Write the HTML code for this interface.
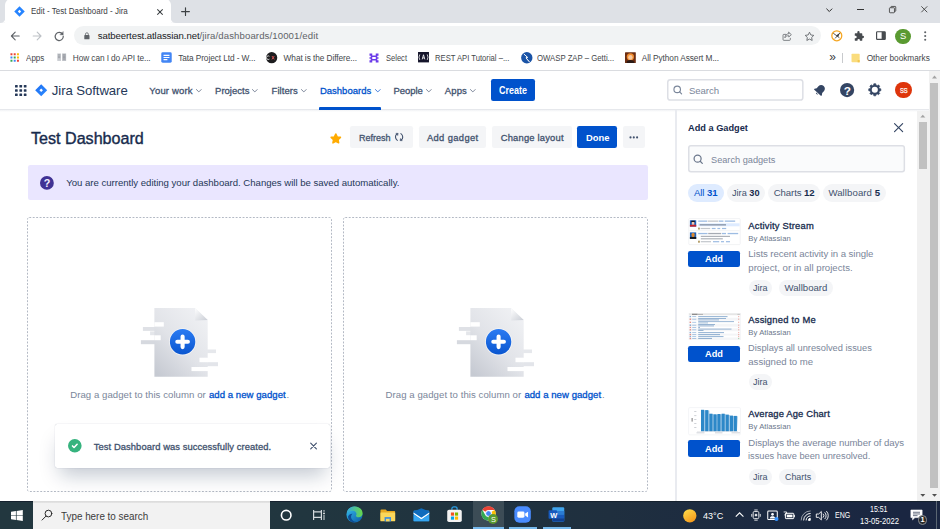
<!DOCTYPE html>
<html lang="en"><head><meta charset="utf-8"><title>Edit - Test Dashboard - Jira</title>
<style>
html,body{margin:0;padding:0;}
body{width:940px;height:529px;overflow:hidden;position:relative;background:#fff;font-family:"Liberation Sans",sans-serif;}
.a{position:absolute;}
.t{position:absolute;white-space:nowrap;font-family:"Liberation Sans",sans-serif;}
.t b{font-weight:700;}
svg{position:absolute;overflow:visible;}
#tabbar{left:0;top:0;width:940px;height:22.800px;background:#dee1e6;}
#tab{left:5.300px;top:-1px;width:165.500px;height:24px;background:#fff;border-radius:6px 6px 0 0;}
#toolbar{left:0;top:22.800px;width:940px;height:25.200px;background:#fff;}
#omni{left:74.400px;top:26.100px;width:747px;height:19.400px;border-radius:10px;background:#f1f3f4;}
#bmbar{left:0;top:48px;width:940px;height:22px;background:#fff;border-bottom:1px solid #dadce0;}
#nav{left:0;top:71px;width:929px;height:38.100px;background:#fff;border-bottom:1.200px solid #e6e8ec;}
#navshadow{left:0;top:110.300px;width:929px;height:1.500px;background:linear-gradient(#f1f2f5,rgba(241,242,245,0));}
.btn{position:absolute;background:#f4f5f7;border-radius:2.2px;}
.pbtn{position:absolute;background:#0052cc;border-radius:2.2px;}
.col{position:absolute;border:1px dashed #c1c7d0;border-radius:3px;box-sizing:border-box;}
.pill{position:absolute;background:#f4f5f7;border-radius:9px;}
#taskbar{left:0;top:501.200px;width:940px;height:27.800px;background:linear-gradient(90deg,#22373f 0%,#21363f 32%,#20333f 50%,#1f2f3f 65%,#1c2a41 80%,#1a2641 96%,#1a2641 100%);border-top:0.800px solid #15212e;box-sizing:border-box;}

</style></head>
<body>
<!-- Chrome tab strip -->
<div class="a" id="tabbar"></div>
<div class="a" id="tab"></div>
<svg style="left:0;top:17px" width="180" height="6" viewBox="0 17 180 6"><path d="M170.800 22.800V17.500Q170.800 22.800 176 22.800zM5.300 22.800V17.500Q5.300 22.800 0.100 22.800z" fill="#fff"/></svg>
<span class="t" style="left:30.9px;top:7.00px;font-size:8.3px;line-height:8.3px;font-weight:400;color:#3c4043;transform-origin:0 50%;transform:scaleX(0.9644);">Edit - Test Dashboard - Jira</span>
<div class="a" id="toolbar"></div>
<div class="a" id="omni"></div>
<span class="t" style="left:97.7px;top:31.00px;font-size:9.6px;line-height:9.6px;font-weight:400;color:#202124;letter-spacing:-0.088px;">satbeertest.atlassian.net</span>
<span class="t" style="left:199.5px;top:31.00px;font-size:9.6px;line-height:9.6px;font-weight:400;color:#5f6368;letter-spacing:0.109px;">/jira/dashboards/10001/edit</span>
<div class="a" id="bmbar"></div>

<!-- tab: favicon, close, new tab -->
<svg style="left:13.700px;top:6.200px" width="11" height="11" viewBox="0 0 24 24"><path d="M12 0.600L23.400 12 12 23.400 0.600 12z" fill="#2684ff"/><path d="M12 8.400L15.600 12 12 15.600 8.400 12z" fill="#fff"/></svg>
<svg style="left:156.6px;top:8.6px" width="6" height="6" viewBox="0 0 10 10"><path d="M1 1l8 8M9 1l-8 8" stroke="#3c4043" stroke-width="1.7" stroke-linecap="round"/></svg>
<svg style="left:181px;top:7px" width="9" height="9" viewBox="181 7 9 9"><path d="M185.500 7.700v7.800M181.600 11.600h7.800" stroke="#3c4043" stroke-width="1.150" stroke-linecap="round"/></svg>
<!-- window controls -->
<svg style="left:826.4px;top:7.6px" width="6.6" height="4.2" viewBox="0 0 10 6"><path d="M0.600 0.800L5 5.200 9.400 0.800" fill="none" stroke="#2a2a2a" stroke-width="1.500"/></svg>
<div class="a" style="left:857.2px;top:9.3px;width:7.2px;height:0.9px;background:#333"></div>
<svg style="left:889.2px;top:6.2px" width="7.2" height="7.2" viewBox="0 0 10 10" fill="none" stroke="#333" stroke-width="1.1"><rect x="0.6" y="2.4" width="7" height="7" rx="1"/><path d="M2.6 2.2V1.4a0.8 0.8 0 0 1 .8-.8h5.200a0.800 0.800 0 0 1 .8.800v5.200a0.800 0.800 0 0 1-.8.800H7.800"/></svg>
<svg style="left:920.6px;top:6.4px" width="6.6" height="6.6" viewBox="0 0 10 10"><path d="M0.500 0.500l9 9M9.500 0.500l-9 9" stroke="#333" stroke-width="1.25"/></svg>
<!-- toolbar: back, forward, reload -->
<svg style="left:10.200px;top:30.700px" width="10.400" height="10" viewBox="0 0 20 20" fill="none" stroke="#5f6368" stroke-width="2.200" stroke-linecap="round" stroke-linejoin="round"><path d="M18 10H2.600M10 2.400L2.400 10l7.600 7.600"/></svg>
<svg style="left:32.200px;top:30.700px" width="10.400" height="10" viewBox="0 0 20 20" fill="none" stroke="#bdc1c6" stroke-width="2.200" stroke-linecap="round" stroke-linejoin="round"><path d="M2 10h15.400M10 2.400l7.600 7.600-7.600 7.600"/></svg>
<svg style="left:54px;top:30.600px" width="10.400" height="10.400" viewBox="0 0 20 20" fill="none" stroke="#5f6368" stroke-width="2.300" stroke-linecap="round"><path d="M16.600 6.400A7.800 7.800 0 1 0 17.800 10"/><path d="M17.600 1.800v5.400h-5.400z" fill="#5f6368" stroke-width="1" stroke-linejoin="round"/></svg>
<!-- lock -->
<svg style="left:84px;top:31.600px" width="5.800" height="7.600" viewBox="0 0 12 16"><rect x="0.500" y="6.500" width="11" height="9" rx="1.400" fill="#5f6368"/><path d="M3 7V4.600a3 3 0 0 1 6 0V7" fill="none" stroke="#5f6368" stroke-width="1.700"/></svg>
<!-- share, star -->
<svg style="left:782.200px;top:31px" width="10.400" height="10.400" viewBox="0 0 20 20" fill="none" stroke="#5f6368" stroke-width="1.500" stroke-linejoin="round" stroke-linecap="round"><path d="M7 6.500H3.500a1.500 1.500 0 0 0-1.500 1.500v8.500a1.500 1.500 0 0 0 1.500 1.500h11a1.500 1.500 0 0 0 1.500-1.500V14"/><path d="M13 2.500l5 4.500-5 4.500V9c-4 0-6 1.500-7.500 4 .5-4.500 3-7.500 7.500-8z"/></svg>
<svg style="left:803.800px;top:30.800px" width="11" height="10.600" viewBox="0 0 24 23"><path d="M12 2.600l2.900 6 6.500.9-4.700 4.600 1.100 6.500L12 17.500l-5.800 3.100 1.100-6.500L2.600 9.500l6.500-.9z" fill="none" stroke="#5f6368" stroke-width="1.900" stroke-linejoin="round"/></svg>
<!-- extension orange -->
<svg style="left:830.800px;top:30.400px" width="11.600" height="11.600" viewBox="0 0 20 20"><circle cx="10" cy="10" r="8.600" fill="#fff" stroke="#f5a623" stroke-width="2.200"/><path d="M4.500 6l9.500 7M15 5.500L7.500 14" stroke="#3a3a3a" stroke-width="1.500" stroke-linecap="round"/><path d="M15 5.500L9 9l3.500 2.500z" fill="#3a3a3a"/></svg>
<!-- puzzle -->
<svg style="left:853.400px;top:30.800px" width="10.800" height="10.800" viewBox="0 0 20 20"><path d="M8 2.200a2.100 2.100 0 0 1 4.200 0V4H16a1.200 1.200 0 0 1 1.200 1.200V9h1.100a2.100 2.100 0 0 1 0 4.200H17.200V17A1.200 1.200 0 0 1 16 18.200h-3.300v-1.400a2.200 2.200 0 0 0-4.400 0v1.400H4.500A1.200 1.200 0 0 1 3.300 17v-3.600h1.200a2.300 2.300 0 0 0 0-4.600H3.300V5.200A1.200 1.200 0 0 1 4.500 4H8z" fill="#474b4f"/></svg>
<!-- side panel -->
<svg style="left:876.200px;top:31.400px" width="9.800" height="9.200" viewBox="0 0 20 18"><rect x="1.200" y="1.200" width="17.600" height="15.600" rx="1.500" fill="#fff" stroke="#474b4f" stroke-width="2.400"/><rect x="11.500" y="1.200" width="7.300" height="15.600" fill="#474b4f"/></svg>
<!-- avatar -->
<div class="a" style="left:895.300px;top:28.500px;width:15.400px;height:15.400px;border-radius:50%;background:#5a9a31"></div>
<span class="t" style="left:899.9px;top:31.00px;font-size:9.4px;line-height:9.4px;font-weight:400;color:#fff;letter-spacing:0.000px;">S</span>
<svg style="left:923.600px;top:31.200px" width="2.400" height="10" viewBox="0 0 2.400 10" fill="#5f6368"><circle cx="1.200" cy="1.300" r="1.050"/><circle cx="1.200" cy="5" r="1.050"/><circle cx="1.200" cy="8.700" r="1.050"/></svg>

<!-- bookmarks -->
<svg style="left:9.700px;top:53px" width="9.400" height="9" viewBox="0 0 10 10"><g><rect x="0.300" y="0.300" width="2.200" height="2.200" fill="#ea4335"/><rect x="3.900" y="0.300" width="2.200" height="2.200" fill="#ea4335"/><rect x="7.500" y="0.300" width="2.200" height="2.200" fill="#fbbc04"/><rect x="0.300" y="3.900" width="2.200" height="2.200" fill="#4285f4"/><rect x="3.900" y="3.900" width="2.200" height="2.200" fill="#34a853"/><rect x="7.500" y="3.900" width="2.200" height="2.200" fill="#fbbc04"/><rect x="0.300" y="7.500" width="2.200" height="2.200" fill="#34a853"/><rect x="3.900" y="7.500" width="2.200" height="2.200" fill="#4285f4"/><rect x="7.500" y="7.500" width="2.200" height="2.200" fill="#ea4335"/></g></svg>
<span class="t" style="left:26.3px;top:54.00px;font-size:8.3px;line-height:8.3px;font-weight:400;color:#44474b;transform-origin:0 50%;transform:scaleX(0.9724);">Apps</span>
<svg style="left:56.700px;top:53.400px" width="9.400" height="8.400" viewBox="0 0 20 18"><rect x="0.500" y="1" width="8" height="16" fill="#c9ccd1"/><rect x="11" y="1" width="8.500" height="16" fill="#b9bcc2"/><path d="M2 4h5M2 7h5M2 10h5M12.500 4h5.500M12.500 7h5.500M12.500 10h5.500M12.500 13h5.500" stroke="#7d8188" stroke-width="1.200"/></svg>
<span class="t" style="left:72.8px;top:54.00px;font-size:8.3px;line-height:8.3px;font-weight:400;color:#44474b;letter-spacing:-0.091px;">How can I do API te...</span>
<svg style="left:161.300px;top:52.400px" width="11" height="11" viewBox="0 0 20 20"><rect x="0.500" y="0.500" width="19" height="19" rx="2.600" fill="#4285f4"/><path d="M4.600 6.200h10.800M4.600 10h10.800M4.600 13.800h7" stroke="#fff" stroke-width="2"/></svg>
<span class="t" style="left:178.2px;top:54.00px;font-size:8.3px;line-height:8.3px;font-weight:400;color:#44474b;letter-spacing:-0.087px;">Tata Project Ltd - W...</span>
<svg style="left:266.400px;top:51.800px" width="11.400" height="11.400" viewBox="0 0 20 20"><circle cx="10" cy="10" r="9.800" fill="#1d1d1f"/><path d="M6 12.500a3.200 3.200 0 1 1 0-5" fill="none" stroke="#e8e8e8" stroke-width="1.500"/><path d="M10.500 7l4 6M14.500 7l-4 6" stroke="#e85a5a" stroke-width="1.500"/></svg>
<span class="t" style="left:283.6px;top:54.00px;font-size:8.3px;line-height:8.3px;font-weight:400;color:#44474b;letter-spacing:-0.078px;">What is the Differe...</span>
<svg style="left:369px;top:52.600px" width="10" height="10" viewBox="0 0 20 20" fill="#6c3ce9"><path d="M1 1h5.500v4h7V1H19v4.500h-2.500v3H19v3h-2.500v3H19V19h-5.500v-4h-7v4H1v-4.500h2.500v-3H1v-3h2.500v-3H1z"/><rect x="6.500" y="8" width="7" height="4" fill="#fff"/></svg>
<span class="t" style="left:385.7px;top:54.00px;font-size:8.3px;line-height:8.3px;font-weight:400;color:#44474b;transform-origin:0 50%;transform:scaleX(0.9106);">Select</span>
<svg style="left:418.200px;top:52.400px" width="11" height="10.400" viewBox="0 0 20 19"><rect width="20" height="19" fill="#15152b"/><path d="M3.200 4.500L1.800 9.500 3.200 14.500M16.800 4.500l1.400 5-1.400 5" stroke="#fff" stroke-width="1.400" fill="none"/><path d="M7.600 13.500L10 5l2.400 8.500M8.400 10.800h3.200" stroke="#fff" stroke-width="1.500" fill="none"/></svg>
<span class="t" style="left:435px;top:54.00px;font-size:8.3px;line-height:8.3px;font-weight:400;color:#44474b;transform-origin:0 50%;transform:scaleX(0.9224);">REST API Tutorial –...</span>
<svg style="left:520.600px;top:51.800px" width="11.600" height="11.600" viewBox="0 0 20 20"><circle cx="10" cy="10" r="9.800" fill="#1a53a6"/><path d="M5 3.500l6 5.500-2.500 1L14.500 17 9 10.500l2.500-1z" fill="#fff" stroke="#fff" stroke-width="1.300" stroke-linejoin="round"/></svg>
<span class="t" style="left:537.4px;top:54.00px;font-size:8.3px;line-height:8.3px;font-weight:400;color:#44474b;transform-origin:0 50%;transform:scaleX(0.9358);">OWASP ZAP – Getti...</span>
<svg style="left:625.400px;top:52px" width="10.800" height="11.200" viewBox="0 0 20 20"><rect width="20" height="20" rx="1" fill="#6b2d12"/><circle cx="10" cy="8.600" r="6.800" fill="#f08a2c"/><circle cx="10" cy="9.600" r="4.200" fill="#f6c9a0"/><path d="M3 20c0-4 3-5.500 7-5.500s7 1.500 7 5.500z" fill="#2a1a16"/></svg>
<span class="t" style="left:641.8px;top:54.00px;font-size:8.3px;line-height:8.3px;font-weight:400;color:#44474b;letter-spacing:-0.071px;">All Python Assert M...</span>
<span class="t" style="left:829.3px;top:51.00px;font-size:12px;line-height:12px;font-weight:400;color:#3c4043;letter-spacing:0.000px;">»</span>
<div class="a" style="left:842.200px;top:52.800px;width:0.800px;height:9.800px;background:#c8cacd"></div>
<svg style="left:850.800px;top:53px" width="9.200" height="10" viewBox="0 0 18 19"><path d="M1 2.400A1.400 1.400 0 0 1 2.400 1h13.200A1.400 1.400 0 0 1 17 2.400V18H2.400A1.400 1.400 0 0 1 1 16.600z" fill="#fadc7d"/><path d="M13 13.500h4V18h-4z" fill="#f3c64b"/></svg>
<span class="t" style="left:866.7px;top:54.00px;font-size:8.3px;line-height:8.3px;font-weight:400;color:#44474b;letter-spacing:-0.036px;">Other bookmarks</span>

<!-- Jira nav -->
<div class="a" id="nav"></div>
<div class="a" id="navshadow"></div>
<span class="t" style="left:51.8px;top:84.00px;font-size:13.2px;line-height:13.2px;font-weight:400;color:#253858;letter-spacing:-0.082px;">Jira Software</span>
<span class="t" style="left:149.3px;top:86.00px;font-size:9.5px;line-height:9.5px;font-weight:400;color:#42526e;letter-spacing:0.166px;-webkit-text-stroke:0.3px #42526e;">Your work</span>
<span class="t" style="left:215.1px;top:86.00px;font-size:9.5px;line-height:9.5px;font-weight:400;color:#42526e;letter-spacing:-0.004px;-webkit-text-stroke:0.3px #42526e;">Projects</span>
<span class="t" style="left:271.6px;top:86.00px;font-size:9.5px;line-height:9.5px;font-weight:400;color:#42526e;letter-spacing:0.032px;-webkit-text-stroke:0.3px #42526e;">Filters</span>
<span class="t" style="left:319.9px;top:86.00px;font-size:9.5px;line-height:9.5px;font-weight:400;color:#0052cc;letter-spacing:0.007px;-webkit-text-stroke:0.3px #0052cc;">Dashboards</span>
<span class="t" style="left:393.4px;top:86.00px;font-size:9.5px;line-height:9.5px;font-weight:400;color:#42526e;letter-spacing:-0.049px;-webkit-text-stroke:0.3px #42526e;">People</span>
<span class="t" style="left:444.8px;top:86.00px;font-size:9.5px;line-height:9.5px;font-weight:400;color:#42526e;letter-spacing:0.136px;-webkit-text-stroke:0.3px #42526e;">Apps</span>
<div class="a" style="left:318.6px;top:107px;width:62.5px;height:2.6px;background:#0052cc;border-radius:1px 1px 0 0"></div>
<div class="pbtn" style="left:490.800px;top:79.100px;width:44.400px;height:21.900px"></div>
<span class="t" style="left:499.3px;top:86.00px;font-size:10.3px;line-height:10.3px;font-weight:700;color:#fff;transform-origin:0 50%;transform:scaleX(0.8702);">Create</span>
<svg style="left:666px;top:78.1px" width="138.6" height="23.8" viewBox="666 78.1 138.6 23.8"><rect x="667.75" y="79.85" width="135.10" height="20.30" rx="2.6" fill="#fff" stroke="#dddfe5" stroke-width="1.5"/></svg>
<span class="t" style="left:689px;top:86.00px;font-size:9.6px;line-height:9.6px;font-weight:400;color:#7a869a;letter-spacing:-0.084px;">Search</span>

<!-- nav icons -->
<svg style="left:14.800px;top:84.500px" width="11.500" height="11" viewBox="0 0 11.500 11" fill="#253858"><rect x="0" y="0" width="2.700" height="2.600" rx="0.500"/><rect x="4.400" y="0" width="2.700" height="2.600" rx="0.500"/><rect x="8.800" y="0" width="2.700" height="2.600" rx="0.500"/><rect x="0" y="4.200" width="2.700" height="2.600" rx="0.500"/><rect x="4.400" y="4.200" width="2.700" height="2.600" rx="0.500"/><rect x="8.800" y="4.200" width="2.700" height="2.600" rx="0.500"/><rect x="0" y="8.400" width="2.700" height="2.600" rx="0.500"/><rect x="4.400" y="8.400" width="2.700" height="2.600" rx="0.500"/><rect x="8.800" y="8.400" width="2.700" height="2.600" rx="0.500"/></svg>
<svg style="left:35.400px;top:83.900px" width="12.400" height="12.400" viewBox="0 0 24 24"><defs><linearGradient id="jl" x1="0" y1="0" x2="1" y2="1"><stop offset="0" stop-color="#1c6ef2"/><stop offset="1" stop-color="#2e8bff"/></linearGradient></defs><path d="M12 0.400L23.600 12 12 23.600 0.400 12z" fill="url(#jl)"/><path d="M12 8.600L15.400 12 12 15.400 8.600 12z" fill="#fff"/></svg>
<svg style="left:195.600px;top:88.700px" width="5.600" height="3.600" viewBox="0 0 10 6"><path d="M0.800 0.800L5 5 9.200 0.800" fill="none" stroke="#6b778c" stroke-width="1.600" stroke-linecap="round" stroke-linejoin="round"/></svg>
<svg style="left:252px;top:88.700px" width="5.600" height="3.600" viewBox="0 0 10 6"><path d="M0.800 0.800L5 5 9.200 0.800" fill="none" stroke="#6b778c" stroke-width="1.600" stroke-linecap="round" stroke-linejoin="round"/></svg>
<svg style="left:300.600px;top:88.700px" width="5.600" height="3.600" viewBox="0 0 10 6"><path d="M0.800 0.800L5 5 9.200 0.800" fill="none" stroke="#6b778c" stroke-width="1.600" stroke-linecap="round" stroke-linejoin="round"/></svg>
<svg style="left:374.500px;top:88.700px" width="5.600" height="3.600" viewBox="0 0 10 6"><path d="M0.800 0.800L5 5 9.200 0.800" fill="none" stroke="#2a6cd6" stroke-width="1.600" stroke-linecap="round" stroke-linejoin="round"/></svg>
<svg style="left:425.600px;top:88.700px" width="5.600" height="3.600" viewBox="0 0 10 6"><path d="M0.800 0.800L5 5 9.200 0.800" fill="none" stroke="#6b778c" stroke-width="1.600" stroke-linecap="round" stroke-linejoin="round"/></svg>
<svg style="left:470.200px;top:88.700px" width="5.600" height="3.600" viewBox="0 0 10 6"><path d="M0.800 0.800L5 5 9.200 0.800" fill="none" stroke="#6b778c" stroke-width="1.600" stroke-linecap="round" stroke-linejoin="round"/></svg>

<svg style="left:672px;top:84px" width="12" height="12" viewBox="672 84 12 12" fill="none" stroke="#7a869a" stroke-width="1.150" stroke-linecap="round"><circle cx="677.200" cy="89.400" r="3.250"/><path d="M679.600 91.800l2 2"/></svg>
<svg style="left:812.500px;top:83.200px" width="14" height="14" viewBox="0 0 24 24"><g transform="rotate(42 12 12)" fill="#344563"><path d="M12 2.600c-3.700 0-6.300 2.900-6.300 6.500v4.300L3.600 16.600c-.5.800 0 1.700.9 1.700h15c.9 0 1.400-.9.900-1.700l-2.100-3.200V9.100c0-3.600-2.600-6.500-6.300-6.500z"/><path d="M9.800 19.600a2.300 2.300 0 0 0 4.400 0z"/></g></svg>
<svg style="left:840px;top:83px" width="14.200" height="14.200" viewBox="0 0 20 20"><circle cx="10" cy="10" r="10" fill="#344563"/></svg>
<span class="t" style="left:843.8px;top:86.00px;font-size:11.8px;line-height:11.8px;font-weight:700;color:#fff;letter-spacing:0.000px;">?</span>
<svg style="left:867.500px;top:83.200px" width="13.600" height="13.600" viewBox="0 0 20 20"><path d="M18.89 8.59 L18.89 11.41 L16.90 11.66 L16.05 13.71 L17.28 15.29 L15.29 17.28 L13.71 16.05 L11.66 16.90 L11.41 18.89 L8.59 18.89 L8.34 16.90 L6.29 16.05 L4.71 17.28 L2.72 15.29 L3.95 13.71 L3.10 11.66 L1.11 11.41 L1.11 8.59 L3.10 8.34 L3.95 6.29 L2.72 4.71 L4.71 2.72 L6.29 3.95 L8.34 3.10 L8.59 1.11 L11.41 1.11 L11.66 3.10 L13.71 3.95 L15.29 2.72 L17.28 4.71 L16.05 6.29 L16.90 8.34z" fill="#344563" stroke="#344563" stroke-width="1" stroke-linejoin="round"/><circle cx="10" cy="10" r="4.500" fill="#fff"/></svg>
<div class="a" style="left:895.300px;top:81.700px;width:16.600px;height:16.600px;border-radius:50%;background:#de350b"></div>
<span class="t" style="left:899.8px;top:88.00px;font-size:6.8px;line-height:6.8px;font-weight:400;color:#fff;transform-origin:0 50%;transform:scaleX(0.8482);-webkit-text-stroke:0.25px #fff;">SS</span>

<!-- Taskbar -->
<div class="a" id="taskbar"></div>

<svg style="left:10.700px;top:509.600px" width="11.800" height="11" viewBox="0 0 24 22" fill="#fff"><path d="M0 3.200L10 1.800V10.400H0zM11.400 1.600L24 0V10.400H11.400zM0 11.600H10V20.200L0 18.800zM11.400 11.600H24V22L11.400 20.400z"/></svg>
<div class="a" style="left:33.200px;top:501.200px;width:236.400px;height:27.800px;background:linear-gradient(#dcdcdc 0,#dedede 1.300px,#f2f2f2 2.200px)"></div>
<svg style="left:41.300px;top:509px" width="12" height="12" viewBox="0 0 20 20" fill="none" stroke="#222" stroke-width="1.600" stroke-linecap="round"><circle cx="12.400" cy="7.600" r="5.600"/><path d="M8.400 11.800L1.800 18.400"/></svg>
<span class="t" style="left:60.8px;top:512.00px;font-size:10.3px;line-height:10.3px;font-weight:400;color:#3b3b3b;transform-origin:0 50%;transform:scaleX(0.9581);">Type here to search</span>
<!-- cortana, task view -->
<svg style="left:280px;top:508.700px" width="12.400" height="12.400" viewBox="0 0 20 20"><circle cx="10" cy="10" r="7.700" fill="none" stroke="#fff" stroke-width="2.600"/></svg>
<svg style="left:311px;top:508px" width="16" height="14" viewBox="311 508 16 14" fill="none" stroke="#d3d9dc" stroke-width="1.200"><path d="M313.600 509.900v10.200M321.400 509.900v10.200M313.600 511.900h7.800M313.600 517.400h7.800"/><path d="M324 510v1.800M324 515v5.100" stroke-width="1.100" stroke="#c3cacd"/><circle cx="324" cy="513.400" r="0.850" fill="#fff" stroke="none"/></svg>
<!-- edge -->
<svg style="left:345.800px;top:506.200px" width="17" height="17" viewBox="0 0 24 24"><defs><linearGradient id="eg1" x1="0" y1="0" x2="1" y2="1"><stop offset="0" stop-color="#35c1f1"/><stop offset="1" stop-color="#0c59a4"/></linearGradient><linearGradient id="eg2" x1="0" y1="0" x2="1" y2="0"><stop offset="0" stop-color="#34a8e0"/><stop offset="1" stop-color="#68d849"/></linearGradient></defs><circle cx="12" cy="12" r="11.400" fill="url(#eg1)"/><path d="M1 10.500C2 4.500 6.500 0.600 12 0.600c6.500 0 11.400 4.400 11.400 9.900 0 3.400-2.600 5.500-5.600 5.500-2.400 0-3.800-1-3.800-2.200 0-.8.800-1.200.8-2.600 0-2.300-2.200-4.400-5.200-4.400-4 0-7 2.400-8.600 3.700z" fill="url(#eg2)"/><path d="M9.200 10.800c-1.800 1.500-2.600 4-1.600 6.800 1 2.700 3.600 4.600 6.600 4.800-5 1.600-10.600-1.400-11.400-7.400 1-2.800 3.600-4.400 6.400-4.200z" fill="#0d4e96"/></svg>
<!-- explorer -->
<svg style="left:380px;top:507.600px" width="15.600" height="14" viewBox="0 0 22 20"><path d="M0.500 3.500A1.500 1.500 0 0 1 2 2h6l2 2.400h10.500a1 1 0 0 1 1 1V18H0.500z" fill="#e8a820"/><rect x="0.500" y="6.400" width="21" height="12.600" rx="0.800" fill="#fbd75b"/><rect x="6.400" y="13" width="9.200" height="6" fill="#3e8ede"/><rect x="8.400" y="15.400" width="5.200" height="3.600" fill="#fbd75b"/></svg>
<!-- mail -->
<svg style="left:413.400px;top:508.200px" width="16.800" height="13.600" viewBox="0 0 24 20"><rect x="0.500" y="3.500" width="23" height="16" rx="1" fill="#1a8ee6"/><path d="M0.500 5L12 0.500 23.500 5v3L12 14 0.500 8z" fill="#0f6cbd"/><path d="M0.500 6.500L12 14.500 23.500 6.500V9L12 17 0.500 9z" fill="#fff"/><path d="M0.500 9.500L12 17l11.500-7.500V19.500H0.500z" fill="#35a6f2"/></svg>
<!-- store -->
<svg style="left:447.200px;top:506.400px" width="15" height="16.600" viewBox="0 0 20 22"><path d="M6.500 5V3.600A2.600 2.600 0 0 1 9.100 1h1.800a2.600 2.600 0 0 1 2.600 2.600V5" fill="none" stroke="#2aa0e8" stroke-width="1.700"/><rect x="0.300" y="4.800" width="19.400" height="16.400" rx="2.400" fill="#f3f3f3"/><rect x="5.200" y="8.600" width="4.200" height="4.200" fill="#f25022"/><rect x="10.600" y="8.600" width="4.200" height="4.200" fill="#7fba00"/><rect x="5.200" y="14" width="4.200" height="4.200" fill="#00a4ef"/><rect x="10.600" y="14" width="4.200" height="4.200" fill="#ffb900"/></svg>
<!-- chrome (active) -->
<div class="a" style="left:472.800px;top:501.200px;width:31.600px;height:27.800px;background:#3c4c56"></div>
<div class="a" style="left:472.600px;top:527.200px;width:31px;height:1.800px;background:#76b9ed"></div>
<svg style="left:481.200px;top:506.300px" width="15" height="15" viewBox="0 0 24 24"><circle cx="12" cy="12" r="11.400" fill="#fff"/><path d="M12 0.600A11.400 11.400 0 0 1 21.900 6.300H12a5.700 5.700 0 0 0-5 2.900L2.200 6.100A11.400 11.400 0 0 1 12 .6z" fill="#ea4335"/><path d="M21.900 6.300A11.400 11.400 0 0 1 11.400 23.400l5.500-8.500a5.700 5.700 0 0 0 0-5.800z" fill="#fbbc04" transform="rotate(0)"/><path d="M2.200 6.100L7 14.900a5.700 5.700 0 0 0 5 2.800l-1 5.700A11.400 11.400 0 0 1 2.200 6.100z" fill="#34a853"/><circle cx="12" cy="12" r="4.500" fill="#4285f4" stroke="#fff" stroke-width="1.200"/></svg>
<div class="a" style="left:488.300px;top:513.900px;width:10.200px;height:10.200px;border-radius:50%;background:#5a9a31"></div>
<span class="t" style="left:491px;top:516.00px;font-size:7.4px;line-height:7.4px;font-weight:400;color:#fff;letter-spacing:0.000px;">S</span>
<!-- zoom -->
<div class="a" style="left:509.100px;top:527.200px;width:27.800px;height:1.800px;background:#76b9ed"></div>
<svg style="left:514.200px;top:506.200px" width="17.200" height="17.200" viewBox="0 0 24 24"><rect x="0.500" y="0.500" width="23" height="23" rx="7" fill="#4a8cff"/><rect x="4.600" y="7.600" width="10" height="8.800" rx="2" fill="#fff"/><path d="M15.600 10.600L19.600 8v8l-4-2.600z" fill="#fff"/></svg>
<!-- word -->
<div class="a" style="left:543.200px;top:527.200px;width:27.700px;height:1.800px;background:#76b9ed"></div>
<svg style="left:548px;top:507.200px" width="16.800" height="15" viewBox="0 0 24 22"><rect x="6" y="0.500" width="17.500" height="21" rx="1.600" fill="#41a5ee"/><rect x="6" y="5.800" width="17.500" height="5.400" fill="#2b7cd3"/><rect x="6" y="11.200" width="17.500" height="5.200" fill="#185abd"/><rect x="6" y="16.400" width="17.500" height="5.100" fill="#103f91"/><rect x="0.500" y="4.600" width="12.400" height="12.800" rx="1.200" fill="#185abd"/></svg>
<span class="t" style="left:550.2px;top:512.00px;font-size:7.4px;line-height:7.4px;font-weight:700;color:#fff;letter-spacing:0.000px;">W</span>
<div class="a" style="left:936.300px;top:501.200px;width:0.800px;height:27.800px;background:#5a6672"></div>
<!-- tray -->
<svg style="left:683px;top:508.800px" width="13.600" height="13.600" viewBox="0 0 20 20"><defs><linearGradient id="sg" x1="0" y1="0" x2="0.600" y2="1"><stop offset="0" stop-color="#ffe14d"/><stop offset="1" stop-color="#f59b1d"/></linearGradient></defs><circle cx="10" cy="10" r="9.800" fill="url(#sg)"/></svg>
<span class="t" style="left:703.2px;top:511.00px;font-size:9.8px;line-height:9.8px;font-weight:400;color:#fff;transform-origin:0 50%;transform:scaleX(0.9228);">43°C</span>
<svg style="left:734.600px;top:512.400px" width="9.200" height="5.400" viewBox="0 0 12 7"><path d="M1 6L6 1l5 5" fill="none" stroke="#fff" stroke-width="1.400"/></svg>
<svg style="left:751px;top:509.200px" width="10" height="12" viewBox="0 0 14 17" fill="none" stroke="#fff" stroke-width="1.200"><rect x="3" y="3.600" width="8" height="10" rx="1.600"/><path d="M4.600 1.400h4.800M4.600 15.800h4.800M1 7v4M13 7v4"/><circle cx="7" cy="8.600" r="1.300" fill="#fff"/></svg>
<svg style="left:766.600px;top:509.600px" width="12.400" height="11.600" viewBox="0 0 18 17"><rect x="1" y="1.600" width="14" height="12.400" rx="1.200" fill="none" stroke="#fff" stroke-width="1.500"/><circle cx="8" cy="6.400" r="2" fill="#fff"/><path d="M4 12.400c0-2.400 2-3.200 4-3.200s4 .8 4 3.200z" fill="#fff"/><circle cx="13.800" cy="13.200" r="3" fill="#3794ff"/></svg>
<svg style="left:783.200px;top:510.600px" width="12" height="9.400" viewBox="0 0 18 14"><rect x="3.600" y="3.400" width="12.600" height="8" rx="1" fill="none" stroke="#fff" stroke-width="1.500"/><rect x="5.600" y="5.400" width="8.600" height="4" fill="#fff"/><path d="M17 6v3" stroke="#fff" stroke-width="1.500"/><path d="M1 1.400h4.400v3H3.200V7" stroke="#fff" stroke-width="1.300" fill="none"/></svg>
<svg style="left:800.400px;top:509.800px" width="11.400" height="11" viewBox="0 0 16 16" fill="none" stroke="#fff" stroke-width="1.400" stroke-linecap="round"><path d="M1.400 14.600A13 13 0 0 1 14.600 1.400" opacity="0.550"/><path d="M5 14.600A9.600 9.600 0 0 1 14.600 5" /><path d="M8.600 14.600A6 6 0 0 1 14.600 8.600"/><path d="M12 14.600a2.600 2.600 0 0 1 2.600-2.600V14.600z" fill="#fff"/></svg>
<svg style="left:816.400px;top:509.600px" width="12.600" height="11.400" viewBox="0 0 18 16" fill="none" stroke="#fff" stroke-width="1.300" stroke-linecap="round"><path d="M1 5.600h2.800L7.600 2v12L3.800 10.400H1z" stroke-linejoin="round"/><path d="M10.400 5.600a3.400 3.400 0 0 1 0 4.800M12.800 3.600a6.200 6.200 0 0 1 0 8.800M15.200 1.800a8.800 8.800 0 0 1 0 12.400"/></svg>
<span class="t" style="left:835px;top:511.00px;font-size:8.5px;line-height:8.5px;font-weight:400;color:#fff;transform-origin:0 50%;transform:scaleX(0.8251);">ENG</span>
<span class="t" style="left:870.4px;top:505.00px;font-size:8.6px;line-height:8.6px;font-weight:400;color:#fff;transform-origin:0 50%;transform:scaleX(0.8134);">15:51</span>
<span class="t" style="left:859.9px;top:517.00px;font-size:8.6px;line-height:8.6px;font-weight:400;color:#fff;transform-origin:0 50%;transform:scaleX(0.8893);">13-05-2022</span>
<svg style="left:909.600px;top:508.600px" width="13" height="12" viewBox="0 0 20 18"><path d="M1.400 1.400h17.200v11.600H7.600L4 16.400v-3.400H1.400z" fill="#fff" stroke="#fff" stroke-width="1" stroke-linejoin="round"/><path d="M4.600 4.800h10.800M4.600 7.400h10.800M4.600 10h7" stroke="#1a2641" stroke-width="1"/></svg>
<div class="a" style="left:917.600px;top:515px;width:9.600px;height:9.600px;border-radius:50%;background:#2b2b2b;border:0.900px solid #8a8f96;box-sizing:border-box"></div>
<span class="t" style="left:920.4px;top:516.00px;font-size:7.4px;line-height:7.4px;font-weight:700;color:#fff;letter-spacing:0.000px;">1</span>

<!-- Page header -->
<span class="t" style="left:30.6px;top:131.00px;font-size:16.7px;line-height:16.7px;font-weight:400;color:#172b4d;transform-origin:0 50%;transform:scaleX(0.9650);-webkit-text-stroke:0.4px #172b4d;">Test Dashboard</span>
<svg style="left:329.500px;top:133.100px" width="11.600" height="11" viewBox="0 0 24 23"><path d="M12 2l2.900 6.200 6.800 0.900-5 4.700 1.250 6.800L12 17.400 6.050 20.600l1.250-6.800L2.300 9.100l6.800-0.900z" fill="#ffab00" stroke="#ffab00" stroke-width="3.200" stroke-linejoin="round"/></svg>
<div class="btn" style="left:350.3px;top:126.1px;width:62.8px;height:21.8px"></div>
<span class="t" style="left:358.9px;top:133.00px;font-size:9.4px;line-height:9.4px;font-weight:400;color:#42526e;transform-origin:0 50%;transform:scaleX(0.9626);-webkit-text-stroke:0.3px #42526e;">Refresh</span>
<svg style="left:393px;top:131px" width="12" height="12" viewBox="393 131 12 12" fill="none" stroke="#42526e" stroke-width="1.100" stroke-linecap="round"><path d="M397.300 140.400C394.900 138.700 394.900 135.400 397 133.900"/><path d="M396.300 133.300l1.900 0.100-0.400 1.800z" fill="#42526e" stroke-width="0.500" stroke-linejoin="round"/><path d="M400.900 133.600C403.300 135.300 403.300 138.600 401.200 140.100"/><path d="M401.900 140.700l-1.900-0.100 0.400-1.800z" fill="#42526e" stroke-width="0.500" stroke-linejoin="round"/></svg>
<div class="btn" style="left:418.6px;top:126.1px;width:67.6px;height:21.8px"></div>
<span class="t" style="left:426.9px;top:133.00px;font-size:9.4px;line-height:9.4px;font-weight:400;color:#42526e;letter-spacing:0.373px;-webkit-text-stroke:0.3px #42526e;">Add gadget</span>
<div class="btn" style="left:492.1px;top:126.1px;width:79.8px;height:21.8px"></div>
<span class="t" style="left:500.7px;top:133.00px;font-size:9.4px;line-height:9.4px;font-weight:400;color:#42526e;letter-spacing:0.195px;-webkit-text-stroke:0.3px #42526e;">Change layout</span>
<div class="pbtn" style="left:577.3px;top:126.1px;width:39.8px;height:21.8px"></div>
<span class="t" style="left:585.9px;top:133.00px;font-size:9.7px;line-height:9.7px;font-weight:700;color:#fff;transform-origin:0 50%;transform:scaleX(0.9662);">Done</span>
<div class="btn" style="left:622.7px;top:126.1px;width:22px;height:21.8px"></div>
<svg style="left:629px;top:136px" width="10" height="3" viewBox="0 0 10 3"><circle cx="1.5" cy="1.4" r="1.05" fill="#42526e"/><circle cx="4.8" cy="1.4" r="1.05" fill="#42526e"/><circle cx="8.1" cy="1.4" r="1.05" fill="#42526e"/></svg>

<!-- Banner -->
<div class="a" style="left:27.7px;top:164.8px;width:620px;height:35.2px;background:#eae6ff;border-radius:2.2px"></div>
<svg style="left:40px;top:175.500px" width="13.800" height="13.800" viewBox="0 0 20 20"><circle cx="10" cy="10" r="10" fill="#403294"/></svg>
<span class="t" style="left:43.7px;top:178.00px;font-size:10.8px;line-height:10.8px;font-weight:700;color:#f3f0ff;letter-spacing:0.000px;">?</span>
<span class="t" style="left:66.2px;top:178.00px;font-size:9.6px;line-height:9.6px;font-weight:400;color:#253858;letter-spacing:-0.015px;">You are currently editing your dashboard. Changes will be saved automatically.</span>

<!-- Columns -->
<svg style="left:26.0px;top:216.0px" width="307.0" height="277.0" viewBox="26.0 216.0 307.0 277.0"><rect x="27.5" y="217.5" width="304.0" height="274.0" rx="1.800" fill="none" stroke="#aab1bd" stroke-width="0.900" stroke-dasharray="1.900 1.540"/></svg>
<svg style="left:342.0px;top:216.0px" width="307.0" height="277.0" viewBox="342.0 216.0 307.0 277.0"><rect x="343.5" y="217.5" width="304.0" height="274.0" rx="1.800" fill="none" stroke="#aab1bd" stroke-width="0.900" stroke-dasharray="1.900 1.540"/></svg>

<!-- Column placeholders -->
<svg style="left:140px;top:307px" width="80" height="71" viewBox="0 0 80 71">
<defs>
<linearGradient id="dg1" x1="0.9" y1="0" x2="0.1" y2="1"><stop offset="0" stop-color="#f1f2f5"/><stop offset="0.55" stop-color="#e1e3e8"/><stop offset="1" stop-color="#c6cad2"/></linearGradient>
<linearGradient id="fg1" x1="0" y1="0" x2="1" y2="1"><stop offset="0" stop-color="#ffffff"/><stop offset="1" stop-color="#c9cdd5"/></linearGradient>
<linearGradient id="cg1" x1="0" y1="0" x2="0" y2="1"><stop offset="0" stop-color="#2b7bf2"/><stop offset="1" stop-color="#0a56d0"/></linearGradient>
</defs>
<rect x="2.9" y="20" width="22" height="3.9" fill="#dfe1e6"/>
<rect x="10.1" y="24.4" width="12" height="3.8" fill="#e4e6ea"/>
<rect x="0.9" y="33.2" width="22" height="4" fill="#d6d9df"/>
<rect x="60" y="42.5" width="16" height="3.6" fill="#e6e8ec"/>
<rect x="59.500" y="55.200" width="18.500" height="4" fill="#e3e5ea"/>
<path d="M14.4 1H55.1L67.7 13.1V69.7H14.4z" fill="url(#dg1)"/>
<path d="M55.1 1V13.4L67.7 13.1z" fill="url(#fg1)"/>
<rect x="14.4" y="15.2" width="9.4" height="4.4" fill="#fff"/>
<rect x="14.400" y="28.300" width="6.300" height="4.900" fill="#fff"/>
<rect x="51.500" y="60" width="16.500" height="4.100" fill="#fff"/><rect x="59.500" y="50.700" width="8.500" height="4.500" fill="#fff"/>

<circle cx="42.600" cy="34.800" r="13.600" fill="#fff" fill-opacity="0.550"/>
<circle cx="42.600" cy="34.800" r="12.700" fill="url(#cg1)"/>
<path d="M42.600 29.500v10.600M37.300 34.800h10.600" stroke="#fff" stroke-width="4.100" stroke-linecap="round"/>
</svg>
<span class="t" style="left:70.2px;top:390.00px;font-size:9.6px;line-height:9.6px;font-weight:400;color:#7a869a;letter-spacing:0.056px;">Drag a gadget to this column or</span>
<span class="t" style="left:209.0px;top:390.00px;font-size:9.6px;line-height:9.6px;font-weight:400;color:#0052cc;letter-spacing:0.031px;-webkit-text-stroke:0.3px #0052cc;">add a new gadget</span>
<span class="t" style="left:286.6px;top:390.00px;font-size:9.6px;line-height:9.6px;font-weight:400;color:#7a869a;letter-spacing:0.000px;">.</span>
<svg style="left:455.800px;top:307px" width="80" height="71" viewBox="0 0 80 71">
<defs>
<linearGradient id="dg2" x1="0.9" y1="0" x2="0.1" y2="1"><stop offset="0" stop-color="#f1f2f5"/><stop offset="0.55" stop-color="#e1e3e8"/><stop offset="1" stop-color="#c6cad2"/></linearGradient>
<linearGradient id="fg2" x1="0" y1="0" x2="1" y2="1"><stop offset="0" stop-color="#ffffff"/><stop offset="1" stop-color="#c9cdd5"/></linearGradient>
<linearGradient id="cg2" x1="0" y1="0" x2="0" y2="1"><stop offset="0" stop-color="#2b7bf2"/><stop offset="1" stop-color="#0a56d0"/></linearGradient>
</defs>
<rect x="2.9" y="20" width="22" height="3.9" fill="#dfe1e6"/>
<rect x="10.1" y="24.4" width="12" height="3.8" fill="#e4e6ea"/>
<rect x="0.9" y="33.2" width="22" height="4" fill="#d6d9df"/>
<rect x="60" y="42.5" width="16" height="3.6" fill="#e6e8ec"/>
<rect x="59.500" y="55.200" width="18.500" height="4" fill="#e3e5ea"/>
<path d="M14.4 1H55.1L67.7 13.1V69.7H14.4z" fill="url(#dg2)"/>
<path d="M55.1 1V13.4L67.7 13.1z" fill="url(#fg2)"/>
<rect x="14.4" y="15.2" width="9.4" height="4.4" fill="#fff"/>
<rect x="14.400" y="28.300" width="6.300" height="4.900" fill="#fff"/>
<rect x="51.500" y="60" width="16.500" height="4.100" fill="#fff"/><rect x="59.500" y="50.700" width="8.500" height="4.500" fill="#fff"/>

<circle cx="42.600" cy="34.800" r="13.600" fill="#fff" fill-opacity="0.550"/>
<circle cx="42.600" cy="34.800" r="12.700" fill="url(#cg2)"/>
<path d="M42.600 29.500v10.600M37.300 34.800h10.600" stroke="#fff" stroke-width="4.100" stroke-linecap="round"/>
</svg>
<span class="t" style="left:385.6px;top:390.00px;font-size:9.6px;line-height:9.6px;font-weight:400;color:#7a869a;letter-spacing:0.056px;">Drag a gadget to this column or</span>
<span class="t" style="left:524.4px;top:390.00px;font-size:9.6px;line-height:9.6px;font-weight:400;color:#0052cc;letter-spacing:0.031px;-webkit-text-stroke:0.3px #0052cc;">add a new gadget</span>
<span class="t" style="left:602.0px;top:390.00px;font-size:9.6px;line-height:9.6px;font-weight:400;color:#7a869a;letter-spacing:0.000px;">.</span>

<!-- Flag -->
<div class="a" style="left:54.6px;top:424.3px;width:275.6px;height:43.7px;background:#fff;border-radius:2.5px;box-shadow:0 0 1px rgba(9,30,66,0.31),0 12px 20px -5px rgba(9,30,66,0.25)"></div>
<svg style="left:67.500px;top:438.900px" width="13.600" height="13.600" viewBox="0 0 20 20"><circle cx="10" cy="10" r="10" fill="#36b37e"/><path d="M6.600 10.200l2.300 2.300L13.400 7.800" fill="none" stroke="#fff" stroke-width="2.300" stroke-linecap="round" stroke-linejoin="round"/></svg>
<span class="t" style="left:93.8px;top:442.00px;font-size:9.4px;line-height:9.4px;font-weight:400;color:#42526e;letter-spacing:0.071px;-webkit-text-stroke:0.3px #42526e;">Test Dashboard was successfully created.</span>
<svg style="left:309px;top:441px" width="10" height="10" viewBox="309 441 10 10"><path d="M310.700 443.100l5.700 5.700M316.400 443.100l-5.700 5.700" stroke="#42526e" stroke-width="1.150" stroke-linecap="round"/></svg>

<!-- Add a Gadget panel -->
<div class="a" style="left:675.200px;top:110px;width:1.700px;height:391.200px;background:#e9ebf0"></div>
<span class="t" style="left:688.3px;top:123.00px;font-size:9.7px;line-height:9.7px;font-weight:700;color:#172b4d;transform-origin:0 50%;transform:scaleX(0.9510);">Add a Gadget</span>
<svg style="left:894px;top:123.2px" width="9.2" height="9.2" viewBox="0 0 10 10"><path d="M0.6 0.6l8.8 8.8M9.4 0.6l-8.8 8.8" stroke="#344563" stroke-width="1.25" stroke-linecap="round"/></svg>
<svg style="left:687.2px;top:144.4px" width="219.1" height="29.5" viewBox="687.2 144.4 219.1 29.5"><rect x="688.95" y="146.15" width="215.60" height="26.00" rx="2.2" fill="#fafbfc" stroke="#dddfe5" stroke-width="1.5"/></svg>
<svg style="left:692px;top:153px" width="12" height="12" viewBox="692 153 12 12" fill="none" stroke="#6b778c" stroke-width="1.250" stroke-linecap="round"><circle cx="697.600" cy="158.700" r="3.500"/><path d="M700.200 161.300l2.100 2.100"/></svg>
<span class="t" style="left:710.6px;top:155.00px;font-size:9.7px;line-height:9.7px;font-weight:400;color:#7a869a;transform-origin:0 50%;transform:scaleX(0.9488);">Search gadgets</span>
<div class="pill" style="left:688.3px;top:184.3px;width:35.4px;height:17.6px;background:#deebff"></div>
<span class="t" style="left:693.9px;top:188.00px;font-size:9.6px;line-height:9.6px;font-weight:400;color:#0052cc;letter-spacing:-0.050px;">All <b>31</b></span>
<div class="pill" style="left:727.1px;top:184.3px;width:37.7px;height:17.6px"></div>
<span class="t" style="left:732.2px;top:188.00px;font-size:9.6px;line-height:9.6px;font-weight:400;color:#42526e;transform-origin:0 50%;transform:scaleX(0.9550);">Jira <b style="color:#172b4d">30</b></span>
<div class="pill" style="left:767.9px;top:184.3px;width:52.3px;height:17.6px"></div>
<span class="t" style="left:773.8px;top:188.00px;font-size:9.6px;line-height:9.6px;font-weight:400;color:#42526e;letter-spacing:-0.112px;">Charts <b style="color:#172b4d">12</b></span>
<div class="pill" style="left:822.8px;top:184.3px;width:63.1px;height:17.6px"></div>
<span class="t" style="left:828.4px;top:188.00px;font-size:9.6px;line-height:9.6px;font-weight:400;color:#42526e;letter-spacing:0.087px;">Wallboard <b style="color:#172b4d">5</b></span>

<!-- Gadget 1 -->
<svg style="left:688px;top:217.6px" width="53" height="27.4" viewBox="688 217.6 53 27.4"><rect x="688.8" y="218.2" width="51.4" height="26" rx="0.8" fill="#fff" stroke="#e9ebef" stroke-width="0.6"/><rect x="689.9" y="219.9" width="6.3" height="6.3" fill="#1f5fb8"/><rect x="691.2" y="220.3" width="3.7" height="1.7" fill="#1a1a22"/><rect x="691.8" y="221.6" width="2.5" height="2.8" fill="#f0c8b0"/><rect x="689.9" y="224.4" width="6.300" height="1.800" fill="#c4202a"/><rect x="698.2" y="220.100" width="9" height="1.300" fill="#5b8fd0" opacity="0.600"/><rect x="707.800" y="220.100" width="10.400" height="1.300" fill="#8a8f99" opacity="0.500"/><rect x="718.800" y="220.100" width="4.600" height="1.300" fill="#5b8fd0" opacity="0.600"/><rect x="724.800" y="220.100" width="10.400" height="1.300" fill="#5b8fd0" opacity="0.600"/><rect x="698.100" y="222.900" width="41.500" height="3" fill="#deebff"/><rect x="699.600" y="223.800" width="26.400" height="1.300" fill="#4a5568" opacity="0.600"/><rect x="698" y="227.200" width="1.900" height="1.900" fill="#b59f6a"/><rect x="700.600" y="227.500" width="9.600" height="1.200" fill="#9aa0aa" opacity="0.600"/><rect x="711.800" y="227.500" width="3.800" height="1.200" fill="#5b8fd0" opacity="0.600"/><rect x="717.400" y="227.500" width="2.800" height="1.200" fill="#5b8fd0" opacity="0.600"/><rect x="722" y="227.500" width="4.200" height="1.200" fill="#5b8fd0" opacity="0.600"/><rect x="689.400" y="230.200" width="50" height="0.500" fill="#e4e6ea"/><rect x="689.900" y="232" width="6.300" height="6.500" fill="#1f5fb8"/><rect x="691.600" y="232.600" width="2.900" height="4" rx="1.200" fill="#e08a2e"/><rect x="689.900" y="236.600" width="6.300" height="1.900" fill="#15151a"/><rect x="698.200" y="232.500" width="9.300" height="1.300" fill="#5b8fd0" opacity="0.600"/><rect x="708.200" y="232.500" width="13" height="1.300" fill="#6b7380" opacity="0.600"/><rect x="722" y="232.500" width="4" height="1.300" fill="#5b8fd0" opacity="0.600"/><rect x="727.600" y="232.500" width="10.600" height="1.300" fill="#5b8fd0" opacity="0.600"/><rect x="700.800" y="235.400" width="29.200" height="1.200" fill="#6b7380" opacity="0.550"/><rect x="700.800" y="237.800" width="22" height="1.200" fill="#6b7380" opacity="0.550"/><rect x="698" y="240.300" width="1.900" height="2" fill="#b59f6a"/><rect x="700.800" y="240.700" width="10.200" height="1.200" fill="#9aa0aa" opacity="0.600"/><rect x="713" y="240.700" width="6.200" height="1.200" fill="#5b8fd0" opacity="0.600"/><rect x="721" y="240.700" width="3" height="1.200" fill="#5b8fd0" opacity="0.600"/><rect x="726" y="240.700" width="4" height="1.200" fill="#5b8fd0" opacity="0.600"/></svg>
<div class="pbtn" style="left:688.200px;top:250.5px;width:51.800px;height:16.500px"></div>
<span class="t" style="left:705.2px;top:254.00px;font-size:9.7px;line-height:9.7px;font-weight:700;color:#fff;transform-origin:0 50%;transform:scaleX(0.9499);">Add</span>
<span class="t" style="left:748.3px;top:221.00px;font-size:9.4px;line-height:9.4px;font-weight:400;color:#172b4d;letter-spacing:0.206px;-webkit-text-stroke:0.3px #172b4d;">Activity Stream</span>
<span class="t" style="left:748.3px;top:235.00px;font-size:7.7px;line-height:7.7px;font-weight:400;color:#6b778c;letter-spacing:0.051px;">By Atlassian</span>
<span class="t" style="left:748.3px;top:249.00px;font-size:9.6px;line-height:9.6px;font-weight:400;color:#7a869a;letter-spacing:-0.058px;">Lists recent activity in a single</span>
<span class="t" style="left:748.3px;top:263.00px;font-size:9.6px;line-height:9.6px;font-weight:400;color:#7a869a;letter-spacing:0.015px;">project, or in all projects.</span>
<div class="pill" style="left:748.8px;top:280.0px;width:23.7px;height:16.100px"></div>
<span class="t" style="left:753.3px;top:283.00px;font-size:9.6px;line-height:9.6px;font-weight:400;color:#42526e;transform-origin:0 50%;transform:scaleX(0.9374);">Jira</span>
<div class="pill" style="left:778.6px;top:280.0px;width:54.4px;height:16.100px"></div>
<span class="t" style="left:784.5px;top:283.00px;font-size:9.6px;line-height:9.6px;font-weight:400;color:#42526e;letter-spacing:0.006px;">Wallboard</span>

<!-- Gadget 2 -->
<svg style="left:688px;top:312.4px" width="53" height="27.8" viewBox="688 312.4 53 27.8"><g transform="translate(0 0.700)"><rect x="689" y="313.100" width="51.500" height="26.400" fill="#fff" stroke="#eceef1" stroke-width="0.500"/><rect x="689" y="313.100" width="51.500" height="1.800" fill="#e6e6e6"/><rect x="692" y="313.400" width="5.600" height="1.300" fill="#8c8c8c"/><rect x="698" y="313.600" width="5" height="1" fill="#b0b0b0"/><rect x="737.400" y="313.600" width="2.400" height="1" fill="#c4c4c4"/><rect x="689.600" y="315.60" width="1.500" height="1.400" fill="#3b73af" opacity="0.600"/><rect x="692.200" y="315.85" width="4" height="0.900" fill="#6a9bd0" opacity="0.600"/><rect x="698.200" y="315.75" width="29.3" height="1.100" fill="#3b73af" opacity="0.520"/><rect x="738.200" y="315.70" width="1" height="1.200" fill="#e0574a" opacity="0.500"/><rect x="689.200" y="317.45" width="51" height="2.9" fill="#f4f5f7"/><rect x="689.600" y="318.20" width="1.500" height="1.400" fill="#d04437" opacity="0.600"/><rect x="692.200" y="318.45" width="4" height="0.900" fill="#6a9bd0" opacity="0.600"/><rect x="698.200" y="317.70" width="27.8" height="1" fill="#3b73af" opacity="0.500"/><rect x="698.200" y="319.10" width="20.8" height="1" fill="#3b73af" opacity="0.500"/><rect x="738.200" y="318.30" width="1" height="1.200" fill="#e0574a" opacity="0.500"/><rect x="689.600" y="321.30" width="1.500" height="1.400" fill="#d04437" opacity="0.600"/><rect x="692.200" y="321.55" width="4" height="0.900" fill="#6a9bd0" opacity="0.600"/><rect x="698.200" y="320.80" width="35.8" height="1" fill="#3b73af" opacity="0.500"/><rect x="698.200" y="322.20" width="9.8" height="1" fill="#3b73af" opacity="0.500"/><rect x="738.200" y="321.40" width="1" height="1.200" fill="#e0574a" opacity="0.500"/><rect x="689.200" y="323.45" width="51" height="2.9" fill="#f4f5f7"/><rect x="689.600" y="324.20" width="1.500" height="1.400" fill="#3b73af" opacity="0.600"/><rect x="692.200" y="324.45" width="4" height="0.900" fill="#6a9bd0" opacity="0.600"/><rect x="698.200" y="323.70" width="16.8" height="1" fill="#3b73af" opacity="0.500"/><rect x="698.200" y="325.10" width="15.8" height="1" fill="#3b73af" opacity="0.500"/><rect x="738.200" y="324.30" width="1" height="1.200" fill="#e0574a" opacity="0.500"/><rect x="689.600" y="326.50" width="1.500" height="1.400" fill="#d04437" opacity="0.600"/><rect x="692.200" y="326.75" width="4" height="0.900" fill="#6a9bd0" opacity="0.600"/><rect x="698.200" y="326.65" width="1.8" height="1.100" fill="#3b73af" opacity="0.520"/><rect x="738.200" y="326.60" width="1" height="1.200" fill="#e0574a" opacity="0.500"/><rect x="689.200" y="328.05" width="51" height="2.9" fill="#f4f5f7"/><rect x="689.600" y="328.80" width="1.500" height="1.400" fill="#d04437" opacity="0.600"/><rect x="692.200" y="329.05" width="4" height="0.900" fill="#6a9bd0" opacity="0.600"/><rect x="698.200" y="328.30" width="33.3" height="1" fill="#3b73af" opacity="0.500"/><rect x="698.200" y="329.70" width="5.3" height="1" fill="#3b73af" opacity="0.500"/><rect x="738.200" y="328.90" width="1" height="1.200" fill="#e0574a" opacity="0.500"/><rect x="689.600" y="331.60" width="1.500" height="1.400" fill="#3b73af" opacity="0.600"/><rect x="692.200" y="331.85" width="4" height="0.900" fill="#6a9bd0" opacity="0.600"/><rect x="698.200" y="331.75" width="25.8" height="1.100" fill="#3b73af" opacity="0.520"/><rect x="738.200" y="331.70" width="1" height="1.200" fill="#e0574a" opacity="0.500"/><rect x="689.200" y="333.30" width="51" height="2.0" fill="#f4f5f7"/><rect x="689.600" y="333.60" width="1.500" height="1.400" fill="#d04437" opacity="0.600"/><rect x="692.200" y="333.85" width="4" height="0.900" fill="#6a9bd0" opacity="0.600"/><rect x="698.200" y="333.75" width="21.8" height="1.100" fill="#3b73af" opacity="0.520"/><rect x="738.200" y="333.70" width="1" height="1.200" fill="#e0574a" opacity="0.500"/><rect x="689.600" y="335.60" width="1.500" height="1.400" fill="#3b73af" opacity="0.600"/><rect x="692.200" y="335.85" width="4" height="0.900" fill="#6a9bd0" opacity="0.600"/><rect x="698.200" y="335.75" width="25.3" height="1.100" fill="#3b73af" opacity="0.520"/><rect x="738.200" y="335.70" width="1" height="1.200" fill="#e0574a" opacity="0.500"/><rect x="689.200" y="337.20" width="51" height="2.0" fill="#f4f5f7"/><rect x="689.600" y="337.50" width="1.500" height="1.400" fill="#d04437" opacity="0.600"/><rect x="692.200" y="337.75" width="4" height="0.900" fill="#6a9bd0" opacity="0.600"/><rect x="698.200" y="337.65" width="13.8" height="1.100" fill="#3b73af" opacity="0.520"/><rect x="738.200" y="337.60" width="1" height="1.200" fill="#55a557" opacity="0.500"/></g></svg>
<div class="pbtn" style="left:688.200px;top:345.6px;width:51.800px;height:16.500px"></div>
<span class="t" style="left:705.2px;top:349.00px;font-size:9.7px;line-height:9.7px;font-weight:700;color:#fff;transform-origin:0 50%;transform:scaleX(0.9499);">Add</span>
<span class="t" style="left:748.3px;top:315.00px;font-size:9.4px;line-height:9.4px;font-weight:400;color:#172b4d;letter-spacing:0.213px;-webkit-text-stroke:0.3px #172b4d;">Assigned to Me</span>
<span class="t" style="left:748.3px;top:329.00px;font-size:7.7px;line-height:7.7px;font-weight:400;color:#6b778c;letter-spacing:0.051px;">By Atlassian</span>
<span class="t" style="left:748.3px;top:343.00px;font-size:9.6px;line-height:9.6px;font-weight:400;color:#7a869a;transform-origin:0 50%;transform:scaleX(0.9673);">Displays all unresolved issues</span>
<span class="t" style="left:748.3px;top:357.00px;font-size:9.6px;line-height:9.6px;font-weight:400;color:#7a869a;letter-spacing:-0.019px;">assigned to me</span>
<div class="pill" style="left:748.8px;top:374.2px;width:23.7px;height:16.100px"></div>
<span class="t" style="left:753.3px;top:377.00px;font-size:9.6px;line-height:9.6px;font-weight:400;color:#42526e;transform-origin:0 50%;transform:scaleX(0.9374);">Jira</span>

<!-- Gadget 3 -->
<svg style="left:688px;top:406.6px" width="53" height="28.6" viewBox="688 406.6 53 28.6"><rect x="688.600" y="407.200" width="51.900" height="27.300" rx="1.200" fill="#fff" stroke="#eceef1" stroke-width="0.600"/><path d="M701 430.900 L701.0 409.8 L705.1 409.8 L705.2 410.1 L709.4 410.1 L709.4 413.7 L713.5 413.7 L713.5 414.3 L717.6 414.3 L717.4 414.0 L721.5 414.0 L721.6 413.7 L725.8 413.7 L725.7 414.6 L729.9 414.6 L729.9 415.6 L734.0 415.6 L733.8 415.9 L737.9 415.9 L737 430.900z" fill="#a9cde9"/><rect x="701.0" y="409.4" width="3.100" height="21.5" fill="#2d88c8"/><rect x="705.2" y="409.7" width="3.100" height="21.2" fill="#2d88c8"/><rect x="709.4" y="413.3" width="3.100" height="17.6" fill="#2d88c8"/><rect x="713.5" y="413.9" width="3.100" height="17.0" fill="#2d88c8"/><rect x="717.4" y="413.6" width="3.100" height="17.3" fill="#2d88c8"/><rect x="721.6" y="413.3" width="3.100" height="17.6" fill="#2d88c8"/><rect x="725.7" y="414.2" width="3.100" height="16.7" fill="#2d88c8"/><rect x="729.9" y="415.2" width="3.100" height="15.7" fill="#2d88c8"/><rect x="733.8" y="415.5" width="3.100" height="15.4" fill="#2d88c8"/><rect x="694.200" y="410.6" width="2.200" height="0.800" fill="#c3c7cd"/><rect x="694.200" y="414.90000000000003" width="2.200" height="0.800" fill="#c3c7cd"/><rect x="694.200" y="418.8" width="2.200" height="0.800" fill="#c3c7cd"/><rect x="694.200" y="422.70000000000005" width="2.200" height="0.800" fill="#c3c7cd"/><rect x="694.200" y="426.6" width="2.200" height="0.800" fill="#c3c7cd"/><rect x="691.600" y="417.600" width="1" height="3.600" fill="#555" opacity="0.800"/><rect x="696.5" y="432" width="8.0" height="0.900" fill="#c9cdd3"/><rect x="715" y="432" width="7.5" height="0.900" fill="#c9cdd3"/><rect x="731.5" y="432" width="8.5" height="0.900" fill="#c9cdd3"/><rect x="697" y="430.900" width="41" height="0.400" fill="#d4d7dc"/></svg>
<div class="pbtn" style="left:688.200px;top:440.0px;width:51.800px;height:16.500px"></div>
<span class="t" style="left:705.2px;top:444.00px;font-size:9.7px;line-height:9.7px;font-weight:700;color:#fff;transform-origin:0 50%;transform:scaleX(0.9499);">Add</span>
<span class="t" style="left:748.3px;top:409.00px;font-size:9.4px;line-height:9.4px;font-weight:400;color:#172b4d;letter-spacing:0.150px;-webkit-text-stroke:0.3px #172b4d;">Average Age Chart</span>
<span class="t" style="left:748.3px;top:423.00px;font-size:7.7px;line-height:7.7px;font-weight:400;color:#6b778c;letter-spacing:0.051px;">By Atlassian</span>
<span class="t" style="left:748.3px;top:438.00px;font-size:9.6px;line-height:9.6px;font-weight:400;color:#7a869a;letter-spacing:-0.077px;">Displays the average number of days</span>
<span class="t" style="left:748.3px;top:451.00px;font-size:9.6px;line-height:9.6px;font-weight:400;color:#7a869a;transform-origin:0 50%;transform:scaleX(0.9635);">issues have been unresolved.</span>
<div class="pill" style="left:748.8px;top:468.5px;width:23.7px;height:16.100px"></div>
<span class="t" style="left:753.3px;top:472.00px;font-size:9.6px;line-height:9.6px;font-weight:400;color:#42526e;transform-origin:0 50%;transform:scaleX(0.9374);">Jira</span>
<div class="pill" style="left:778.5px;top:468.5px;width:37.9px;height:16.100px"></div>
<span class="t" style="left:784.7px;top:472.00px;font-size:9.6px;line-height:9.6px;font-weight:400;color:#42526e;transform-origin:0 50%;transform:scaleX(0.9234);">Charts</span>

<!-- Scrollbars -->
<div class="a" style="left:917px;top:110.6px;width:11.7px;height:390.4px;background:#f1f1f1"></div>
<div class="a" style="left:918.8px;top:121.5px;width:8.2px;height:47.5px;background:#c1c1c1"></div>
<div class="a" style="left:928.7px;top:71px;width:11.3px;height:430px;background:#f1f1f1"></div>
<div class="a" style="left:930.4px;top:82.7px;width:7.6px;height:405.5px;background:#c1c1c1"></div>
<svg style="left:917px;top:71px" width="23" height="430" viewBox="0 0 23 430" fill="#505050"><path d="M15 7.400l2.500-2.800 2.500 2.800z" fill="#a3a3a3"/><path d="M3.3 46.6l2.5-2.8 2.5 2.8z" fill="#a3a3a3"/><path d="M3.3 423l2.5 2.8 2.5-2.8z"/><path d="M15 423l2.5 2.8 2.5-2.8z"/></svg>

</body></html>
